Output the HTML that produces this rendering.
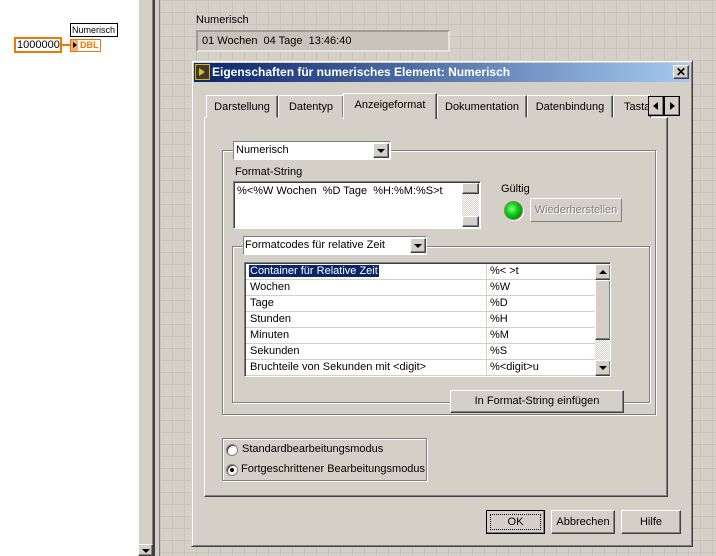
<!DOCTYPE html>
<html><head><style>
*{margin:0;padding:0;box-sizing:border-box}
body{width:716px;height:556px;position:relative;overflow:hidden;font-family:"Liberation Sans",sans-serif;font-size:11px;color:#000;background:#fff}
.a{position:absolute}
.grid{background-color:#d4d0c8;background-image:linear-gradient(#c8c4bc 1px,transparent 1px),linear-gradient(90deg,#c8c4bc 1px,transparent 1px);background-size:12px 12px}
.sunken{border:1px solid;border-color:#808080 #fff #fff #808080;box-shadow:inset 1px 1px #404040}
.grp{border:1px solid #808080;box-shadow:1px 1px #fff, inset 1px 1px #fff}
.btn{background:#d4d0c8;border:1px solid;border-color:#fff #404040 #404040 #fff;box-shadow:inset -1px -1px #808080;text-align:center}
.tab{position:absolute;top:95px;height:23px;border:1px solid;border-color:#fff #404040 transparent #fff;box-shadow:inset -1px 0 #808080;text-align:center;line-height:23px;background:#d4d0c8}
.row{position:absolute;left:0;height:16px;border-bottom:1px solid #d4d0c8;width:349px}
.row span{position:absolute;top:1px}
</style></head><body>
<div class="a" style="left:0;top:0;width:138px;height:556px;background:#fff"></div>
<div class="a" style="left:70px;top:23px;width:48px;height:14px;border:1px solid #000;background:#fff;font-size:9px;line-height:12px;padding-left:1px;white-space:nowrap;overflow:hidden">Numerisch</div>
<div class="a" style="left:14px;top:37px;width:48px;height:16px;border:2px solid #f07800;background:#fff;font-size:11px;line-height:12px;padding-left:1px">1000000</div>
<div class="a" style="left:62px;top:44px;width:8px;height:2px;background:#f07800"></div>
<div class="a" style="left:70px;top:39px;width:31px;height:13px;border:1px solid #f07800;background:#fff;color:#f07800;font-size:9px;font-weight:bold;line-height:11px;padding-left:9px">DBL</div>
<div class="a" style="left:71px;top:40px;width:7px;height:11px;background:#f8b070"></div>
<div class="a" style="left:73px;top:42px;width:0;height:0;border-left:4px solid #000;border-top:3px solid transparent;border-bottom:3px solid transparent"></div>

<div class="a" style="left:138px;top:0;width:14px;height:556px;background:#d4d0c8;border-left:1px solid #fff"></div>
<div class="a" style="left:152px;top:0;width:3px;height:556px;background:#404040;border-left:1px solid #808080"></div>
<div class="a" style="left:155px;top:0;width:5px;height:556px;background:#d4d0c8"></div>
<div class="a" style="left:159px;top:0;width:1px;height:556px;background:#808080"></div>
<div class="a btn" style="left:138px;top:544px;width:15px;height:12px"></div>
<div class="a" style="left:142px;top:549px;border-top:4px solid #000;border-left:4px solid transparent;border-right:4px solid transparent"></div>
<div class="a grid" style="left:160px;top:0;width:556px;height:556px"></div>

<div class="a" style="left:196px;top:14px">Numerisch</div>
<div class="a" style="left:196px;top:30px;width:254px;height:22px;background:#c8c4bc;border:2px solid;border-color:#a09c94 #e8e4dc #e8e4dc #a09c94;padding:3px 0 0 4px">01 Wochen&nbsp; 04 Tage&nbsp; 13:46:40</div>

<div class="a" style="left:191px;top:60px;width:502px;height:487px;background:#d4d0c8;border:1px solid;border-color:#d4d0c8 #404040 #404040 #d4d0c8;box-shadow:inset 1px 1px #fff,inset -1px -1px #808080"></div>
<div class="a" style="left:194px;top:63px;width:496px;height:19px;background:linear-gradient(90deg,#0a246a,#a6caf0)"></div>
<div class="a" style="left:195px;top:64px;width:15px;height:16px;background:#3a3a3a;border:1px solid #e8b000"></div>
<div class="a" style="left:199px;top:68px;border-left:6px solid #e8c000;border-top:4px solid transparent;border-bottom:4px solid transparent"></div>
<div class="a" style="left:212px;top:65px;color:#fff;font-weight:bold;font-size:12px">Eigenschaften für numerisches Element: Numerisch</div>
<div class="a btn" style="left:673px;top:65px;width:16px;height:14px;font-size:12px;line-height:12px;font-weight:bold">✕</div>

<div class="a" style="left:204px;top:117px;width:464px;height:380px;border:1px solid;border-color:#fff #404040 #404040 #fff;box-shadow:inset -1px -1px #808080"></div>
<div class="tab" style="left:206px;width:72px">Darstellung</div>
<div class="tab" style="left:278px;width:66px">Datentyp</div>
<div class="tab" style="left:343px;top:93px;height:26px;width:94px;z-index:2;border-bottom:none">Anzeigeformat</div>
<div class="tab" style="left:437px;width:90px">Dokumentation</div>
<div class="tab" style="left:527px;width:86px">Datenbindung</div>
<div class="tab" style="left:613px;width:38px;text-align:left;padding-left:10px;overflow:hidden">Tasta</div>
<div class="a btn" style="left:648px;top:96px;width:16px;height:20px;border-color:#000"></div>
<div class="a" style="left:653px;top:102px;border-right:5px solid #000;border-top:4px solid transparent;border-bottom:4px solid transparent"></div>
<div class="a btn" style="left:664px;top:96px;width:16px;height:20px;border-color:#000"></div>
<div class="a" style="left:670px;top:102px;border-left:5px solid #000;border-top:4px solid transparent;border-bottom:4px solid transparent"></div>

<div class="a grp" style="left:222px;top:150px;width:434px;height:265px"></div>
<div class="a" style="left:233px;top:141px;width:158px;height:19px;background:#fff;border:1px solid;border-color:#808080 #fff #fff #808080;padding:2px 0 0 2px">Numerisch</div>
<div class="a btn" style="left:373px;top:143px;width:16px;height:15px"></div>
<div class="a" style="left:377px;top:149px;border-top:4px solid #000;border-left:4px solid transparent;border-right:4px solid transparent"></div>
<div class="a" style="left:235px;top:166px">Format-String</div>
<div class="a sunken" style="left:233px;top:181px;width:248px;height:48px;background:#fff;padding:3px 0 0 3px">%&lt;%W Wochen&nbsp; %D Tage&nbsp; %H:%M:%S&gt;t</div>
<div class="a" style="left:462px;top:183px;width:17px;height:44px;background:repeating-conic-gradient(#fff 0 25%,#d4d0c8 0 50%) 0 0/2px 2px"></div>
<div class="a btn" style="left:462px;top:183px;width:17px;height:11px"></div>
<div class="a btn" style="left:462px;top:216px;width:17px;height:11px"></div>
<div class="a" style="left:501px;top:183px">Gültig</div>
<div class="a" style="left:504px;top:201px;width:19px;height:19px;border-radius:50%;background:radial-gradient(circle at 40% 40%,#8f8,#0c0 45%,#060);border:1px solid #808080;box-shadow:1px 1px #fff"></div>
<div class="a" style="left:530px;top:198px;width:92px;height:24px;border:1px solid;border-color:#fff #808080 #808080 #fff;color:#808080;text-align:center;line-height:22px;text-shadow:1px 1px #fff">Wiederherstellen</div>

<div class="a grp" style="left:232px;top:246px;width:418px;height:157px"></div>
<div class="a" style="left:243px;top:236px;width:184px;height:19px;background:#fff;border:1px solid;border-color:#808080 #fff #fff #808080;padding:2px 0 0 1px">Formatcodes für relative Zeit</div>
<div class="a btn" style="left:410px;top:238px;width:16px;height:15px"></div>
<div class="a" style="left:414px;top:244px;border-top:4px solid #000;border-left:4px solid transparent;border-right:4px solid transparent"></div>
<div class="a sunken" style="left:244px;top:262px;width:367px;height:115px;background:#fff;overflow:hidden">
 <div class="a" style="left:1px;top:1px;width:349px;height:112px">
  <div class="row" style="top:0"><span style="left:3px;background:#0a246a;color:#fff;padding:0 1px">Container für Relative Zeit</span><span style="left:244px">%&lt; &gt;t</span></div>
  <div class="row" style="top:16px"><span style="left:4px">Wochen</span><span style="left:244px">%W</span></div>
  <div class="row" style="top:32px"><span style="left:4px">Tage</span><span style="left:244px">%D</span></div>
  <div class="row" style="top:48px"><span style="left:4px">Stunden</span><span style="left:244px">%H</span></div>
  <div class="row" style="top:64px"><span style="left:4px">Minuten</span><span style="left:244px">%M</span></div>
  <div class="row" style="top:80px"><span style="left:4px">Sekunden</span><span style="left:244px">%S</span></div>
  <div class="row" style="top:96px"><span style="left:4px">Bruchteile von Sekunden mit &lt;digit&gt;</span><span style="left:244px">%&lt;digit&gt;u</span></div>
  <div class="a" style="left:240px;top:0;width:1px;height:112px;background:#d4d0c8"></div>
 </div>
 <div class="a" style="left:350px;top:1px;width:16px;height:112px;background:repeating-conic-gradient(#fff 0 25%,#d4d0c8 0 50%) 0 0/2px 2px"></div>
 <div class="a btn" style="left:350px;top:1px;width:16px;height:16px"></div>
 <div class="a" style="left:354px;top:7px;border-bottom:4px solid #000;border-left:4px solid transparent;border-right:4px solid transparent"></div>
 <div class="a btn" style="left:350px;top:17px;width:16px;height:60px"></div>
 <div class="a btn" style="left:350px;top:97px;width:16px;height:16px"></div>
 <div class="a" style="left:354px;top:103px;border-top:4px solid #000;border-left:4px solid transparent;border-right:4px solid transparent"></div>
</div>
<div class="a btn" style="left:450px;top:390px;width:174px;height:23px;line-height:21px">In Format-String einfügen</div>

<div class="a grp" style="left:222px;top:438px;width:205px;height:43px"></div>
<div class="a" style="left:226px;top:444px;width:12px;height:12px;border-radius:50%;background:#fff;border:1px solid #808080;box-shadow:inset 1px 1px #404040"></div>
<div class="a" style="left:242px;top:443px">Standardbearbeitungsmodus</div>
<div class="a" style="left:226px;top:464px;width:12px;height:12px;border-radius:50%;background:#fff;border:1px solid #808080;box-shadow:inset 1px 1px #404040"></div>
<div class="a" style="left:230px;top:468px;width:4px;height:4px;border-radius:50%;background:#000"></div>
<div class="a" style="left:241px;top:463px">Fortgeschrittener Bearbeitungsmodus</div>

<div class="a btn" style="left:486px;top:510px;width:59px;height:24px;border-color:#000;line-height:22px"><div style="position:absolute;left:3px;top:3px;right:3px;bottom:3px;border:1px dotted #000"></div>OK</div>
<div class="a btn" style="left:551px;top:510px;width:64px;height:24px;line-height:22px">Abbrechen</div>
<div class="a btn" style="left:621px;top:510px;width:60px;height:24px;line-height:22px">Hilfe</div>
</body></html>
